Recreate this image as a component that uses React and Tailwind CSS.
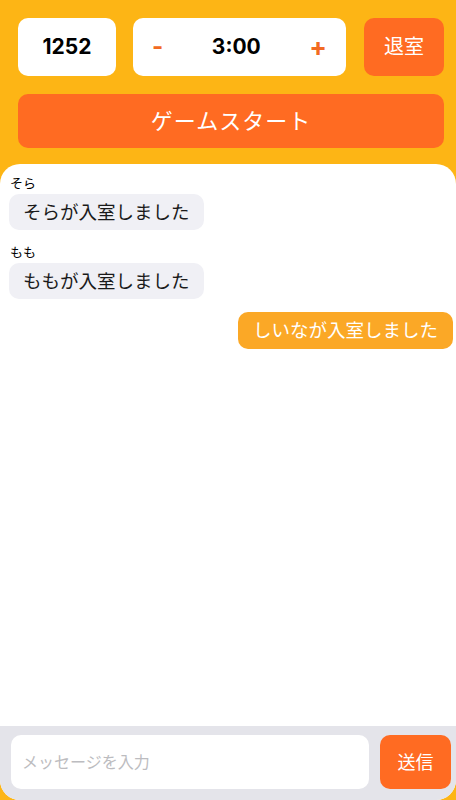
import { useState } from 'react';

const messages = [
  { id: 1, name: 'そら', text: 'そらが入室しました', mine: false },
  { id: 2, name: 'もも', text: 'ももが入室しました', mine: false },
  { id: 3, name: 'しいな', text: 'しいなが入室しました', mine: true },
];

const font = { fontFamily: 'Inter, "Noto Sans CJK JP", sans-serif' };

export default function App() {
  const [draft, setDraft] = useState('');

  return (
    <div className="h-[800px] w-full flex flex-col bg-[#fdb515] overflow-hidden" style={font}>
      {/* Header */}
      <div className="pl-[18px] pr-[12px] pt-[18px]">
        <div className="flex items-center">
          <div className="w-[98px] h-[58px] rounded-[10px] bg-white flex items-center justify-center text-[21px] font-bold text-black">
            1252
          </div>
          <div className="ml-[17px] w-[213px] h-[58px] rounded-[10px] bg-white flex items-center justify-between px-[19px]">
            <button className="text-[24px] font-bold text-[#f26a22] leading-none">-</button>
            <span className="text-[21px] font-bold text-black">3:00</span>
            <button className="text-[26px] font-bold text-[#f26a22] leading-none">+</button>
          </div>
          <button className="ml-auto w-[80px] h-[58px] rounded-[10px] bg-[#ff6b22] text-white text-[20px]">
            退室
          </button>
        </div>
        <button className="mt-[18px] w-full h-[54px] rounded-[10px] bg-[#ff6b22] text-white text-[22px] tracking-[1px]">
          ゲームスタート
        </button>
      </div>

      {/* Chat panel */}
      <div className="mt-[16px] flex-1 flex flex-col bg-white rounded-[20px] overflow-hidden">
        <div className="flex-1 pl-[9px] pr-[3px] pt-[10px] flex flex-col gap-[13px]">
          {messages.map((m) =>
            m.mine ? (
              <div key={m.id} className="flex justify-end">
                <div className="rounded-[10px] bg-[#fba826] text-white text-[18.5px] leading-[25px] px-[15px] py-[6px]">
                  {m.text}
                </div>
              </div>
            ) : (
              <div key={m.id} className="flex flex-col items-start">
                <span className="text-[13px] leading-[18px] text-black ml-[1px]">{m.name}</span>
                <div className="mt-[2px] rounded-[10px] bg-[#f0f0f5] text-[#1a1a1a] text-[18.5px] leading-[24px] px-[14px] py-[6px]">
                  {m.text}
                </div>
              </div>
            )
          )}
        </div>

        <div className="bg-[#e4e4ea] pl-[11px] pr-[5px] pt-[9px] pb-[11px] flex items-center gap-[11px]">
          <input
            value={draft}
            onChange={(e) => setDraft(e.target.value)}
            placeholder="メッセージを入力"
            className="flex-1 min-w-0 h-[54px] rounded-[10px] bg-white px-[11px] text-[16px] outline-none placeholder:text-[#bcbcc0]"
          />
          <button className="w-[71px] h-[54px] rounded-[10px] bg-[#ff6b22] text-white text-[18px]">
            送信
          </button>
        </div>
      </div>
    </div>
  );
}
